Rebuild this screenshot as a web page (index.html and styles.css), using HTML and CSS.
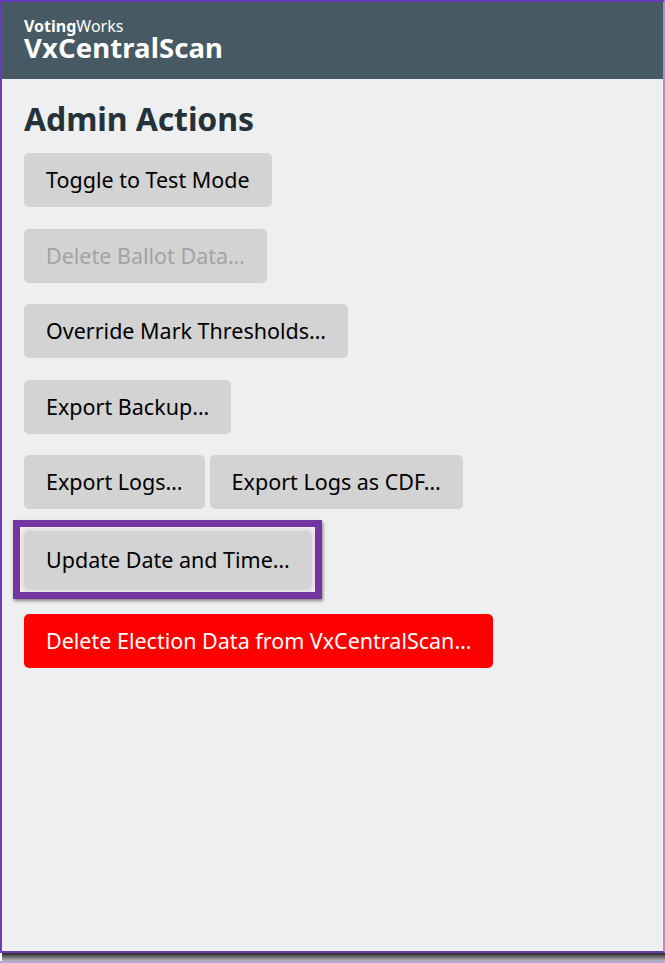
FILE: index.html
```html
<!DOCTYPE html>
<html>
<head>
<meta charset="utf-8">
<link rel="stylesheet" href="styles.css">
</head>
<body>
<div class="window">
  <header class="app-header">
    <div class="brand"><span class="brand-bold">Voting</span>Works</div>
    <div class="app-name">VxCentralScan</div>
  </header>
  <main class="content">
    <h1 class="title">Admin Actions</h1>
    <div class="actions">
      <div class="row"><button class="btn">Toggle to Test Mode</button></div>
      <div class="row"><button class="btn btn-disabled">Delete Ballot Data…</button></div>
      <div class="row"><button class="btn">Override Mark Thresholds…</button></div>
      <div class="row"><button class="btn">Export Backup…</button></div>
      <div class="row row-pair"><button class="btn">Export Logs…</button><button class="btn">Export Logs as CDF…</button></div>
      <div class="row row-focus"><button class="btn btn-focus">Update Date and Time…</button></div>
      <div class="row"><button class="btn btn-danger">Delete Election Data from VxCentralScan…</button></div>
    </div>
  </main>
</div>
<div class="shadow-strip"></div>
<div class="bottom-line"></div>
</body>
</html>
```

FILE: styles.css
```css
html, body {
  margin: 0;
  padding: 0;
  background: #ffffff;
}
body {
  width: 665px;
  height: 963px;
  overflow: hidden;
  font-family: "Noto Sans", "Open Sans", sans-serif;
}
.window {
  box-sizing: border-box;
  width: 665px;
  height: 953px;
  border-left: 2px solid #6a3cb8;
  border-top: 2px solid #6a3cb8;
  border-right: 2px solid #a58fd6;
  border-bottom: 2px solid #6a3cb8;
  background: #edeff1;
  display: flex;
  flex-direction: column;
}
.app-header {
  height: 77px;
  box-sizing: border-box;
  background: #475a64;
  color: #ffffff;
  padding: 14px 0 0 22px;
}
.brand {
  font-size: 16px;
  line-height: 20px;
}
.brand-bold {
  font-weight: 700;
}
.app-name {
  font-size: 27.5px;
  font-weight: 700;
  line-height: 24px;
  letter-spacing: 0.1px;
}
.content {
  padding: 0 0 0 22px;
}
.title {
  margin: 20px 0 14px 0;
  font-size: 32px;
  line-height: 40px;
  font-weight: 700;
  color: #263238;
  letter-spacing: -0.1px;
}
.actions {
  display: flex;
  flex-direction: column;
  gap: 21.6px;
}
.row {
  display: flex;
  gap: 5px;
}
.btn {
  font-family: "Noto Sans", "Open Sans", sans-serif;
  font-size: 21.5px;
  line-height: 30px;
  color: #000000;
  background: #d3d3d3;
  border: none;
  border-radius: 5px;
  padding: 12px 22px;
  height: 54px;
  box-sizing: border-box;
}
.btn-disabled {
  color: #a3a3a3;
}
.btn-danger {
  background: #ff0000;
  color: #ffffff;
}
.row-focus {
  margin-bottom: 2px;
}
.btn-focus {
  position: relative;
  height: 59px;
  padding-top: 14px;
  padding-bottom: 14px;
  box-shadow: 0 0 0 3px #e4e4e4;
}
.btn-focus::after {
  content: "";
  position: absolute;
  top: -11px;
  left: -11px;
  right: -10px;
  bottom: -9px;
  border: 7px solid #7535a0;
  box-shadow: 1px 2px 3px rgba(0, 0, 0, 0.45);
  pointer-events: none;
}
.shadow-strip {
  height: 8px;
  margin-left: 2px;
  background: linear-gradient(#262626, #b8b8b8);
}
.bottom-line {
  height: 2px;
  background: #b6a6df;
}
```
